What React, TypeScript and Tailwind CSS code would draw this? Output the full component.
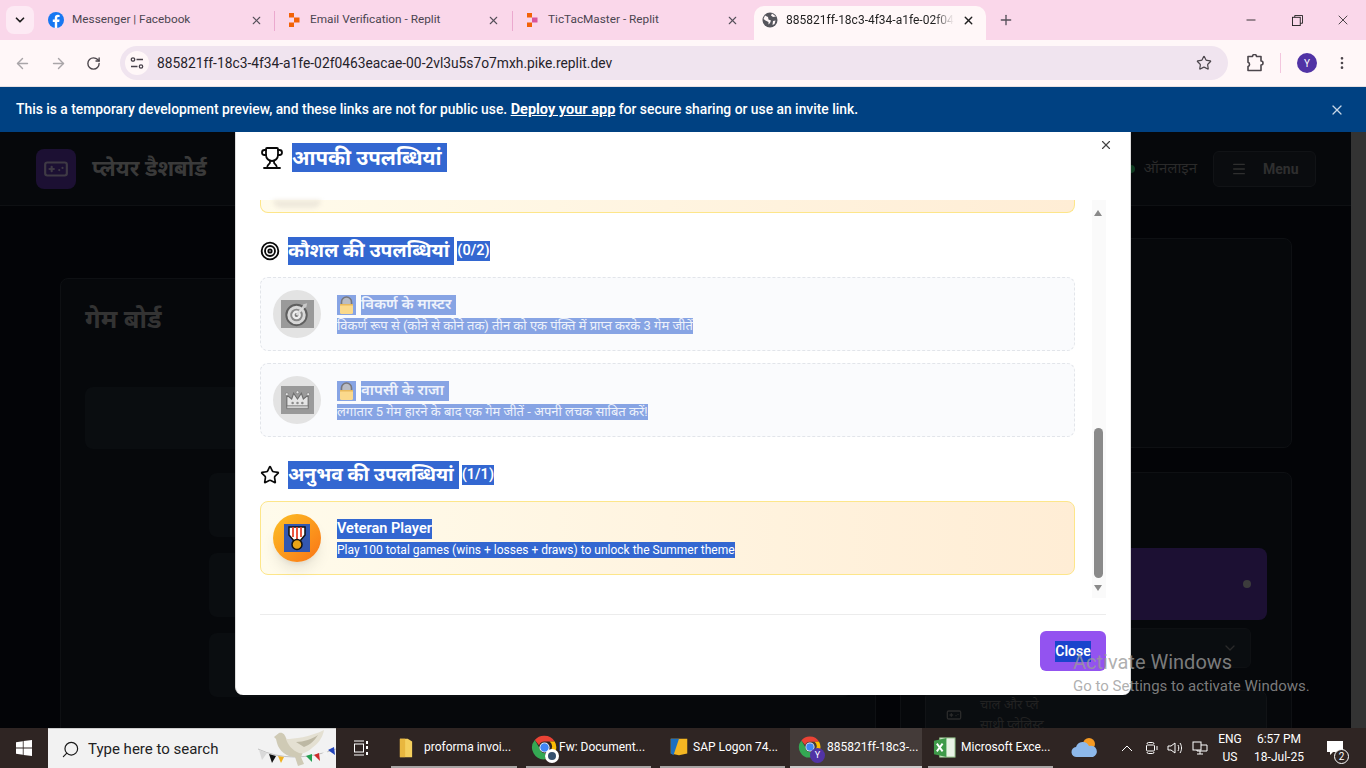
import {
  ArrowLeft,
  ArrowRight,
  ChevronDown,
  EllipsisVertical,
  Gamepad,
  Menu,
  Minus,
  Plus,
  RotateCw,
  Search,
  Star,
  Target,
  Trophy,
  X,
} from "lucide-react";

const FacebookIcon = () => (
  <svg viewBox="0 0 16 16" className="w-4 h-4 shrink-0">
    <circle cx="8" cy="8" r="8" fill="#1877f2" />
    <path d="M9.2 16V10h2l.4-2.4H9.2V6.2c0-.8.3-1.2 1.2-1.2h1.2V3a9 9 0 0 0-1.8-.2C8 2.800 6.800 4 6.800 6v1.600H4.800V10h2v6z" fill="#fff" />
  </svg>
);

const ReplitIcon = () => (
  <svg viewBox="0 0 16 16" className="w-4 h-4 shrink-0">
    <path d="M3 1h5v4.500H3zM8 5.500h5.500v5H8zM3 10.500h5V15H3z" fill="#f26207" />
  </svg>
);

const ReplitIconAlt = () => (
  <svg viewBox="0 0 16 16" className="w-4 h-4 shrink-0">
    <path d="M3 1h5v4.500H3zM3 10.500h5V15H3z" fill="#f26207" />
    <path d="M8 5.500h5.500v5H8z" fill="#d9559a" />
  </svg>
);

const GlobeIcon = () => (
  <svg viewBox="0 0 16 16" className="w-4 h-4 shrink-0">
    <circle cx="8" cy="8" r="7.500" fill="#55555c" />
    <path d="M3 3.500 6 5l.5 2.500L9 8.500 8 11l-1.500 1.500V10L3.500 8.500 1.500 7zM10 1.500l-1 2 2 1.500 3-.5zM11 9l2.500-.5-1 3.500-2 1z" fill="#fff7f8" />
  </svg>
);

const ExtensionIcon = () => (
  <svg viewBox="0 0 18 18" className="w-[18px] h-[18px]" fill="none" stroke="#4c464c" strokeWidth="1.600" strokeLinejoin="round">
    <path d="M2 2.500h4.500a2 2 0 0 1 4 0H15v4.500a2 2 0 0 1 0 4v5.500H2v-4a2.200 2.200 0 0 0 0-4.200z" />
  </svg>
);

const TuneIcon = () => (
  <svg viewBox="0 0 14 14" className="w-[14px] h-[14px]" fill="none" stroke="#47414a" strokeWidth="1.300">
    <circle cx="3" cy="3.500" r="1.700" />
    <path d="M6.500 3.500H13M1 10.500h6.500" />
    <circle cx="11" cy="10.500" r="1.700" />
  </svg>
);

const ChromeIcon = ({ size = 26 }: { size?: number }) => (
  <svg viewBox="0 0 32 32" width={size} height={size} className="shrink-0">
    <path d="M16 2a14 14 0 0 1 12.100 7H16a7 7 0 0 0-6.500 4.400L4.500 7.200A14 14 0 0 1 16 2z" fill="#ea4335" />
    <path d="M28.100 9A14 14 0 0 1 17 30l5.800-10.100A7 7 0 0 0 22 9z" fill="#fbbc04" />
    <path d="M4.500 7.200 10 16.500a7 7 0 0 0 7 6.400L17 30A14 14 0 0 1 4.500 7.200z" fill="#34a853" />
    <circle cx="16" cy="16" r="6" fill="#fff" />
    <circle cx="16" cy="16" r="5" fill="#4285f4" />
  </svg>
);

const LockEmoji = () => (
  <svg viewBox="0 0 19 20" className="w-[19px] h-5 bg-[#87a4e4] shrink-0">
    <path d="M4.500 10V7a5 5 0 0 1 10 0v3z" fill="#b9bcc4" stroke="#77777c" strokeWidth="1.600" />
    <rect x="3" y="9" width="13" height="10" rx="1.500" fill="#fbd98c" />
    <rect x="3" y="9" width="13" height="1.500" fill="#e9b95c" />
  </svg>
);

const TargetEmoji = () => (
  <svg viewBox="0 0 34 28" className="w-[33px] h-7 bg-[#9a9a9a]">
    <circle cx="16" cy="15" r="10.500" fill="#d8d8d8" stroke="#5f5f5f" strokeWidth="2" />
    <circle cx="16" cy="15" r="6.500" fill="#8a8a8a" />
    <circle cx="16" cy="15" r="4.500" fill="#eeeeee" />
    <circle cx="16" cy="15" r="2" fill="#777777" />
    <path d="M16 15 24 6" stroke="#dddddd" strokeWidth="2.500" />
    <path d="M22 8l1-4 4-1-1 4z" fill="#c9c9c9" />
  </svg>
);

const CrownEmoji = () => (
  <svg viewBox="0 0 34 28" className="w-[33px] h-7 bg-[#9a9a9a]">
    <path d="M6 9l5 4 2-6 4 6 4-6 2 6 5-4v12H6z" fill="#e4e4e4" stroke="#6f6f6f" strokeWidth="1.200" />
    <rect x="6" y="20" width="22" height="3" fill="#cfcfcf" stroke="#6f6f6f" strokeWidth=".8" />
    <circle cx="12" cy="17" r="1.300" fill="#8a8a8a" />
    <circle cx="17" cy="17" r="1.300" fill="#8a8a8a" />
    <circle cx="22" cy="17" r="1.300" fill="#8a8a8a" />
    <circle cx="6" cy="8" r="1.500" fill="#e4e4e4" stroke="#6f6f6f" strokeWidth=".6" />
    <circle cx="17" cy="6" r="1.500" fill="#e4e4e4" stroke="#6f6f6f" strokeWidth=".6" />
    <circle cx="28" cy="8" r="1.500" fill="#e4e4e4" stroke="#6f6f6f" strokeWidth=".6" />
  </svg>
);

const MedalEmoji = () => (
  <svg viewBox="0 0 26 28" className="w-[26px] h-7 bg-[#3357b0]">
    <path d="M5 3h16v8l-5 6h-6l-5-6z" fill="#fff" stroke="#111" strokeWidth="1.500" />
    <path d="M9 3v10M13 3v12M17 3v10" stroke="#e8452c" strokeWidth="1.800" />
    <circle cx="13" cy="20.500" r="5" fill="#e8a317" stroke="#111" strokeWidth="1.500" />
  </svg>
);

const tabs = [
  { icon: <FacebookIcon />, title: "Messenger | Facebook", cls: "w-[233px] pl-[6px] pr-[12px]", divider: true },
  { icon: <ReplitIcon />, title: "Email Verification - Replit", cls: "w-[238px] pl-[11px] pr-[13px]", divider: true },
  { icon: <ReplitIconAlt />, title: "TicTacMaster - Replit", cls: "w-[241px] pl-[11px] pr-[15px]", divider: false },
];

const TabStrip = () => (
  <div className="h-10 bg-[#fad7ea] flex items-stretch pl-[6px] shrink-0">
    <div className="w-7 h-7 mt-[6px] rounded-lg bg-[#fdeaf4] flex items-center justify-center mr-[8px]">
      <ChevronDown size={14} strokeWidth={3} className="text-[#1f1f1f]" />
    </div>
    {tabs.map((t) => (
      <div key={t.title} className={`${t.cls} flex items-center gap-2 relative`}>
        {t.icon}
        <span className="flex-1 text-[11.800px] text-[#4b4550] whitespace-nowrap">{t.title}</span>
        <X size={13} strokeWidth={2} className="text-[#55505a]" />
        {t.divider && <div className="absolute right-0 top-[11px] h-5 w-px bg-[#eba9cf]" />}
      </div>
    ))}
    <div className="w-[232px] mt-[6px] pb-[6px] bg-[#fff7f8] rounded-t-[10px] flex items-center pl-2 pr-2 gap-2">
      <GlobeIcon />
      <span className="w-[168px] overflow-hidden text-xs text-[#1f1f1f] whitespace-nowrap [mask-image:linear-gradient(to_right,black_88%,transparent)]">885821ff-18c3-4f34-a1fe-02f0463eacae</span>
      <X size={13} strokeWidth={2.500} className="text-[#1f1f1f]" />
    </div>
    <div className="ml-3 flex items-center">
      <Plus size={16} strokeWidth={2} className="text-[#55505a]" />
    </div>
    <div className="ml-auto flex items-center text-[#1f1f1f]">
      <div className="w-[46px] flex justify-center"><Minus size={14} strokeWidth={1.500} /></div>
      <div className="w-[46px] flex justify-center">
        <svg viewBox="0 0 12 12" className="w-[11px] h-[11px]" fill="none" stroke="currentColor">
          <rect x=".5" y="2.500" width="8.500" height="9" />
          <path d="M3 2.500V.5h8.500V9H9" />
        </svg>
      </div>
      <div className="w-[46px] flex justify-center"><X size={16} strokeWidth={1.200} /></div>
    </div>
  </div>
);

const Toolbar = () => (
  <div className="h-[47px] bg-[#fff7f8] flex items-center shrink-0 border-b border-[#e6e0e3]">
    <div className="w-[120px] flex items-center pl-[14px] gap-[19px]">
      <ArrowLeft size={17} className="text-[#a9a5a8]" />
      <ArrowRight size={17} className="text-[#a9a5a8]" />
      <RotateCw size={15} strokeWidth={2.200} className="text-[#4c464c]" />
    </div>
    <div className="w-[1108px] h-[34px] bg-[#f0e4ef] rounded-full flex items-center pl-[5px] pr-[16px]">
      <div className="w-6 h-6 rounded-full bg-[#fff7f8] flex items-center justify-center">
        <TuneIcon />
      </div>
      <span className="ml-2 text-[13.800px] text-[#26222a] whitespace-nowrap">885821ff-18c3-4f34-a1fe-02f0463eacae-00-2vl3u5s7o7mxh.pike.replit.dev</span>
      <Star size={16} strokeWidth={1.800} className="ml-auto text-[#4c464c]" />
    </div>
    <div className="ml-[18px]"><ExtensionIcon /></div>
    <div className="ml-4 w-px h-5 bg-[#f3c6de]" />
    <div className="ml-4 w-5 h-5 rounded-full bg-[#5133a5] text-white text-[10px] flex items-center justify-center">Y</div>
    <EllipsisVertical size={16} className="ml-[17px] text-[#4c464c]" />
  </div>
);

const Banner = () => (
  <div className="h-[45px] bg-[#004182] flex items-center pl-4 pr-[21px] pt-px shrink-0 text-white text-[13.850px] font-medium">
    <span>
      This is a temporary development preview, and these links are not for public use.{" "}
      <span className="underline font-bold text-[14.500px]">Deploy your app</span> for secure sharing or use an invite link.
    </span>
    <X size={16} strokeWidth={1.800} className="ml-auto text-[#c7d6e6]" />
  </div>
);

// dimmed dashboard behind the modal
const Dashboard = () => (
  <div className="flex-1 min-w-0 bg-[#030407]">
    <div className="h-[74px] bg-[#06080b] border-b border-[#0e1013] flex items-center pl-9 pr-[35px]">
      <div className="w-10 h-10 rounded-lg bg-[#1c1033] flex items-center justify-center">
        <Gamepad size={26} className="text-[#3f3a45]" />
      </div>
      <span className="ml-4 text-[22px] font-bold text-[#3a3a3a]">प्लेयर डैशबोर्ड</span>
      <div className="ml-auto w-2 h-2 rounded-full bg-[#0d3a1f]" />
      <span className="ml-[9px] text-[15px] text-[#2a2a2a]">ऑनलाइन</span>
      <div className="ml-4 w-[103px] h-9 rounded-md border border-[#111316] bg-[#0a0c0f] flex items-center pl-[17px] gap-4">
        <Menu size={16} className="text-[#2f2f2f]" />
        <span className="text-sm font-bold text-[#2f2f2f]">Menu</span>
      </div>
    </div>
    <div className="flex pl-[60px] pt-8 gap-6">
      <div className="w-[816px] mt-10 h-[600px] rounded-lg bg-[#06080b] border border-[#0e1013] px-6 pt-[21px]">
        <h2 className="text-[25.500px] font-bold text-[#333333] h-[87px]">गेम बोर्ड</h2>
        <div className="h-[62px] rounded-lg bg-[#0a0d10]" />
        <div className="ml-[124px] mt-6 flex flex-col gap-4">
          <div className="h-16 rounded-lg bg-[#0a0d10]" />
          <div className="h-16 rounded-lg bg-[#0a0d10]" />
          <div className="h-16 rounded-lg bg-[#0a0d10]" />
        </div>
      </div>
      <div className="w-[392px] flex flex-col gap-6">
        <div className="h-[210px] rounded-lg bg-[#06080b] border border-[#0e1013]" />
        <div className="h-[300px] rounded-lg bg-[#06080b] border border-[#0e1013] px-6 pt-[75px]">
          <div className="h-[72px] rounded-lg bg-[#1c1033] flex items-center justify-end pr-4">
            <div className="w-2 h-2 rounded-full bg-[#3c3c3c]" />
          </div>
          <div className="mx-4 mt-2 h-10 rounded-md bg-[#0a0d10] border border-[#0e1013] flex items-center justify-end pr-3">
            <ChevronDown size={16} className="text-[#2a2a2a]" />
          </div>
          <div className="mt-[22px] h-20 rounded-lg bg-[#0a0d10] border border-[#111316] flex gap-[18px] pl-5 pt-1 text-[13px] leading-5 text-[#222222]">
            <Gamepad size={16} className="mt-3 text-[#2a2a2a]" />
            <span>चाल और प्ले<br />साथी प्लेलिस्ट</span>
          </div>
        </div>
      </div>
    </div>
  </div>
);

const SectionHeading = ({ icon, title, count }: { icon: React.ReactNode; title: string; count: string }) => (
  <div className="h-7 flex items-center">
    <div className="w-7 shrink-0">{icon}</div>
    <span className="h-7 inline-flex items-center pr-[5px] bg-[#3367d1] text-white text-[19.200px] font-bold whitespace-nowrap">{title}</span>
    <span className="ml-[3px] h-5 inline-flex items-center bg-[#3367d1] text-white text-[14.500px] font-semibold">{count}</span>
  </div>
);

const LockedCard = ({ icon, title, desc }: { icon: React.ReactNode; title: string; desc: string }) => (
  <div className="h-[74px] rounded-lg border border-dashed border-[#e2e5ea] bg-[#fafbfd] flex items-center px-3 gap-4">
    <div className="w-12 h-12 rounded-full bg-[#e3e3e3] flex items-center justify-center shrink-0">{icon}</div>
    <div className="flex flex-col items-start gap-[3px]">
      <div className="flex gap-[5px]">
        <LockEmoji />
        <span className="h-5 inline-flex items-center pr-[5px] bg-[#87a4e4] text-[#eef2fb] text-[15px] font-semibold">{title}</span>
      </div>
      <span className="h-4 inline-flex items-center bg-[#87a4e4] text-[#eef2fb] text-[13px] whitespace-nowrap">{desc}</span>
    </div>
  </div>
);

const Modal = () => (
  <div className="absolute left-[235px] top-0 w-[896px] h-[563px] bg-white rounded-b-lg border-l border-r border-[#dddddd] flex flex-col px-6">
    <div className="h-[68px] shrink-0 relative flex pt-[11px]">
      <Trophy size={24} strokeWidth={1.800} className="text-[#0a0a0a] mt-[3px]" />
      <span className="ml-2 h-[29px] inline-flex items-center pr-[5px] pt-[2px] bg-[#3367d1] text-white text-[20.500px] font-bold">आपकी उपलब्धियां</span>
      <X size={14} className="absolute right-[-7px] top-[6px] text-[#444444]" />
    </div>
    <div className="h-[398px] shrink-0 flex justify-between">
      <div className="w-[815px]">
        <div className="h-[13px] rounded-b-lg border border-t-0 border-[#fde68a] bg-gradient-to-r from-[#fffbeb] to-[#ffedd5] flex justify-start pl-3">
          <div className="w-12 h-2 rounded-b-full bg-[#efe9dc] blur-[2px]" />
        </div>
        <div className="mt-6">
          <SectionHeading icon={<Target size={20} strokeWidth={2.200} className="text-[#0a0a0a]" />} title="कौशल की उपलब्धियां" count="(0/2)" />
        </div>
        <div className="mt-3 flex flex-col gap-3">
          <LockedCard icon={<TargetEmoji />} title="विकर्ण के मास्टर" desc="विकर्ण रूप से (कोने से कोने तक) तीन को एक पंक्ति में प्राप्त करके 3 गेम जीतें" />
          <LockedCard icon={<CrownEmoji />} title="वापसी के राजा" desc="लगातार 5 गेम हारने के बाद एक गेम जीतें - अपनी लचक साबित करें!" />
        </div>
        <div className="mt-6">
          <SectionHeading icon={<Star size={20} strokeWidth={2} className="text-[#0a0a0a]" />} title="अनुभव की उपलब्धियां" count="(1/1)" />
        </div>
        <div className="mt-3 h-[74px] rounded-lg border border-[#fde68a] bg-gradient-to-r from-[#fffbeb] to-[#ffedd5] flex items-center px-3 gap-4">
          <div className="w-12 h-12 rounded-full bg-gradient-to-br from-[#fbbf24] to-[#f97316] shadow-lg flex items-center justify-center shrink-0">
            <MedalEmoji />
          </div>
          <div className="flex flex-col items-start gap-[3px]">
            <span className="h-5 inline-flex items-center bg-[#3367d1] text-white text-[14.500px] font-semibold">Veteran Player</span>
            <span className="h-4 inline-flex items-center bg-[#3367d1] text-white text-xs whitespace-nowrap">Play 100 total games (wins + losses + draws) to unlock the Summer theme</span>
          </div>
        </div>
      </div>
      <div className="w-[14px] bg-[#fafafa] flex flex-col items-center pr-[2px]">
        <div className="h-4 flex items-end justify-center">
          <div className="w-0 h-0 border-x-[4px] border-x-transparent border-b-[6px] border-b-[#8a8a8a]" />
        </div>
        <div className="flex-1" />
        <div className="w-[9px] h-[150px] rounded-full bg-[#8a8a8a]" />
        <div className="h-5 flex items-center justify-center">
          <div className="w-0 h-0 border-x-[4px] border-x-transparent border-t-[6px] border-t-[#8a8a8a]" />
        </div>
      </div>
    </div>
    <div className="mt-4 border-t border-[#ececec] pt-4 flex justify-end">
      <div className="w-[66px] h-10 rounded-md bg-[#9353f0] flex items-center justify-center">
        <span className="h-[21px] inline-flex items-center bg-[#1a44cc] text-white text-sm font-semibold">Close</span>
      </div>
    </div>
  </div>
);

const FolderIcon = () => (
  <svg viewBox="0 0 16 24" className="w-[14px] h-[21px] shrink-0">
    <path d="M1 2h9l5 3v18H1z" fill="#f4cf5d" />
    <path d="M1 2h6v21H1z" fill="#e8b73f" />
  </svg>
);

const SapIcon = () => (
  <svg viewBox="0 0 24 24" className="w-[22px] h-[22px] shrink-0">
    <path d="M3 3h18v16L12 21 3 19z" fill="#f4b622" />
    <path d="M3 3h9L6 21 3 19z" fill="#1c6fc0" />
  </svg>
);

const ExcelIcon = () => (
  <svg viewBox="0 0 24 24" className="w-[23px] h-[23px] shrink-0">
    <rect x="7" y="2" width="16" height="20" fill="#e9f3e6" stroke="#8fbf85" />
    <path d="M1 5l13-3v20L1 19z" fill="#3f9a4a" />
    <path d="M4 8l6 8M10 8l-6 8" stroke="#fff" strokeWidth="2" />
  </svg>
);

const ChromeDoc = () => (
  <div className="relative shrink-0">
    <ChromeIcon size={27} />
    <span className="absolute right-[-1px] bottom-[-2px] w-[14px] h-[14px] rounded-full bg-white flex items-center justify-center">
      <span className="w-2 h-2 rounded-full bg-[#35506e]" />
    </span>
  </div>
);

const ChromeProfile = () => (
  <div className="relative shrink-0">
    <ChromeIcon size={24} />
    <span className="absolute right-[-3px] bottom-[-4px] w-[15px] h-[15px] rounded-full bg-[#5133a5] text-[9px] leading-[15px] text-center text-white">Y</span>
  </div>
);

const taskItems = [
  { label: "proforma invoi...", icon: <FolderIcon />, cls: "w-[126px] ml-[5px] pl-2 gap-[11px]", active: false },
  { label: "Fw: Document...", icon: <ChromeDoc />, cls: "w-[125px] ml-[9px] pl-[5px] gap-px", active: false },
  { label: "SAP Logon 74...", icon: <SapIcon />, cls: "w-[125px] ml-[9px] pl-2 gap-[3px]", active: false },
  { label: "885821ff-18c3-...", icon: <ChromeProfile />, cls: "w-[132px] ml-[5px] pl-2 gap-[5px]", active: true },
  { label: "Microsoft Exce...", icon: <ExcelIcon />, cls: "w-[125px] ml-[6px] pl-[5px] gap-[5px]", active: false },
];

const Dove = () => (
  <svg viewBox="0 0 84 38" className="absolute right-0 top-0 w-[84px] h-[38px]">
    <path d="M6 20 Q40 36 84 20" fill="none" stroke="#aaaaaa" strokeWidth=".7" />
    <path d="M7 21l8 3-5 7z" fill="#d9d9d9" />
    <path d="M17 25l7 2-4 7z" fill="#111111" />
    <path d="M26 27l6 1-3 6z" fill="#f0b020" />
    <path d="M54 27l6-2 0 8z" fill="#22a050" />
    <path d="M62 26l5-2 1 8z" fill="#cc2b2b" />
    <path d="M70 24l5-2 1 7z" fill="#f4f4f4" />
    <path d="M76 21l6-3 1 8z" fill="#2244bb" />
    <path d="M22 8l5-4c4-1 6 2 7 5 2 5 8 8 14 8l3 6-2 5 3 7-6 2-3-9c-8 0-16-6-18-14l-1-4z" fill="#cfcab5" />
    <path d="M34 10C42 10 58 8 72 1c-1 7-6 14-12 18-4 4-9 6-13 5-7-3-11-8-13-14z" fill="#e4e0d2" />
    <path d="M44 13c8 0 16-3 22-7-3 5-8 10-14 12z" fill="#bdb8a4" />
  </svg>
);

const Taskbar = () => (
  <div className="h-10 bg-[#2f2523] flex items-stretch shrink-0 text-white">
    <div className="w-[48px] flex items-center justify-center">
      <svg viewBox="0 0 16 16" className="w-4 h-4" fill="#fff">
        <path d="M0 2.200 6.800 1.200v6.400H0zM7.600 1.100 16 0v7.600H7.600zM0 8.400h6.800v6.400L0 13.800zM7.600 8.400H16V16l-8.400-1.100z" />
      </svg>
    </div>
    <div className="w-[288px] bg-[#f2f2f2] flex items-center pl-[13px] pt-px relative border-t border-[#cccccc]">
      <Search size={19} strokeWidth={1.500} className="text-[#1a1a1a] -scale-x-100" />
      <span className="ml-2 text-[15px] text-[#222222]">Type here to search</span>
      <Dove />
    </div>
    <div className="w-[50px] flex items-center justify-center">
      <svg viewBox="0 0 16 16" className="w-4 h-4" fill="none" stroke="#fff">
        <path d="M1 1h10M1 15h10" />
        <rect x="1.500" y="4" width="9" height="8" />
        <path d="M14 1v3M14 6v3M14 12v3" strokeWidth="2" />
      </svg>
    </div>
    {taskItems.map((t) => (
      <div
        key={t.label}
        className={`${t.cls} ${t.active ? "bg-[#443b39] border-[#c9c9c9]" : "border-[#a9a6a5]"} border-b-2 flex items-center whitespace-nowrap`}
      >
        {t.icon}
        <span className="text-xs">{t.label}</span>
      </div>
    ))}
    <div className="ml-[18px] flex items-center">
      <svg viewBox="0 0 28 24" className="w-7 h-6">
        <circle cx="18" cy="8" r="6" fill="#f59a23" />
        <path d="M6 21a5 5 0 0 1-1-10 7 7 0 0 1 13-1 5.500 5.500 0 0 1 4 11z" fill="#8db8ea" />
      </svg>
    </div>
    <div className="ml-[22px] flex items-center">
      <svg viewBox="0 0 12 8" className="w-3 h-2" fill="none" stroke="#fff"><path d="M1 7l5-5 5 5" /></svg>
      <svg viewBox="0 0 16 16" className="ml-[11px] w-4 h-4" fill="none" stroke="#fff"><path d="M3 4a1.500 1.500 0 0 1 1.500-1.500h4A1.500 1.500 0 0 1 10 4M3 12a1.500 1.500 0 0 0 1.500 1.500h4A1.500 1.500 0 0 0 10 12" /><rect x="2.500" y="5" width="8" height="6" rx="1" /><path d="M13 6v4" /></svg>
      <svg viewBox="0 0 16 16" className="ml-[7px] w-4 h-4" fill="none" stroke="#fff"><path d="M1 6v4h3l4 3V3L4 6zM11 5c1 2 1 4 0 6M13 3c2 3 2 7 0 10" /></svg>
      <svg viewBox="0 0 16 16" className="ml-[9px] w-4 h-4" fill="none" stroke="#fff"><rect x="1" y="2" width="8" height="8" /><path d="M9 5h6v6H5v-1M8 11v3M5 14h6" /></svg>
    </div>
    <div className="ml-[10px] w-6 flex flex-col items-center justify-center text-xs leading-[18px]">
      <span>ENG</span>
      <span>US</span>
    </div>
    <div className="ml-[5px] w-[64px] flex flex-col items-center justify-center text-xs leading-[18px] whitespace-nowrap">
      <span>6:57 PM</span>
      <span>18-Jul-25</span>
    </div>
    <div className="ml-3 w-6 flex items-center justify-center relative">
      <svg viewBox="0 0 16 16" className="w-4 h-4" fill="#fff"><path d="M0 1h16v11H6l-3 3v-3H0z" /></svg>
      <span className="absolute right-[-2px] bottom-[4px] w-[15px] h-[15px] rounded-full bg-[#2f2523] border border-white text-[10px] leading-[13px] text-center">2</span>
    </div>
  </div>
);

export default function App() {
  return (
    <div className="w-screen h-screen overflow-hidden flex flex-col font-['Roboto','Noto_Sans',sans-serif]">
      <TabStrip />
      <Toolbar />
      <Banner />
      <div className="flex-1 min-h-0 relative flex overflow-hidden">
        <Dashboard />
        <div className="w-[15px] bg-[#333333] shrink-0" />
        <Modal />
        {/* windows watermark */}
        <div className="absolute left-[1073px] top-[516px] pointer-events-none text-[#9a9a9a]/80">
          <div className="text-xl">Activate Windows</div>
          <div className="text-[15px] leading-5">Go to Settings to activate Windows.</div>
        </div>
      </div>
      <Taskbar />
    </div>
  );
}
